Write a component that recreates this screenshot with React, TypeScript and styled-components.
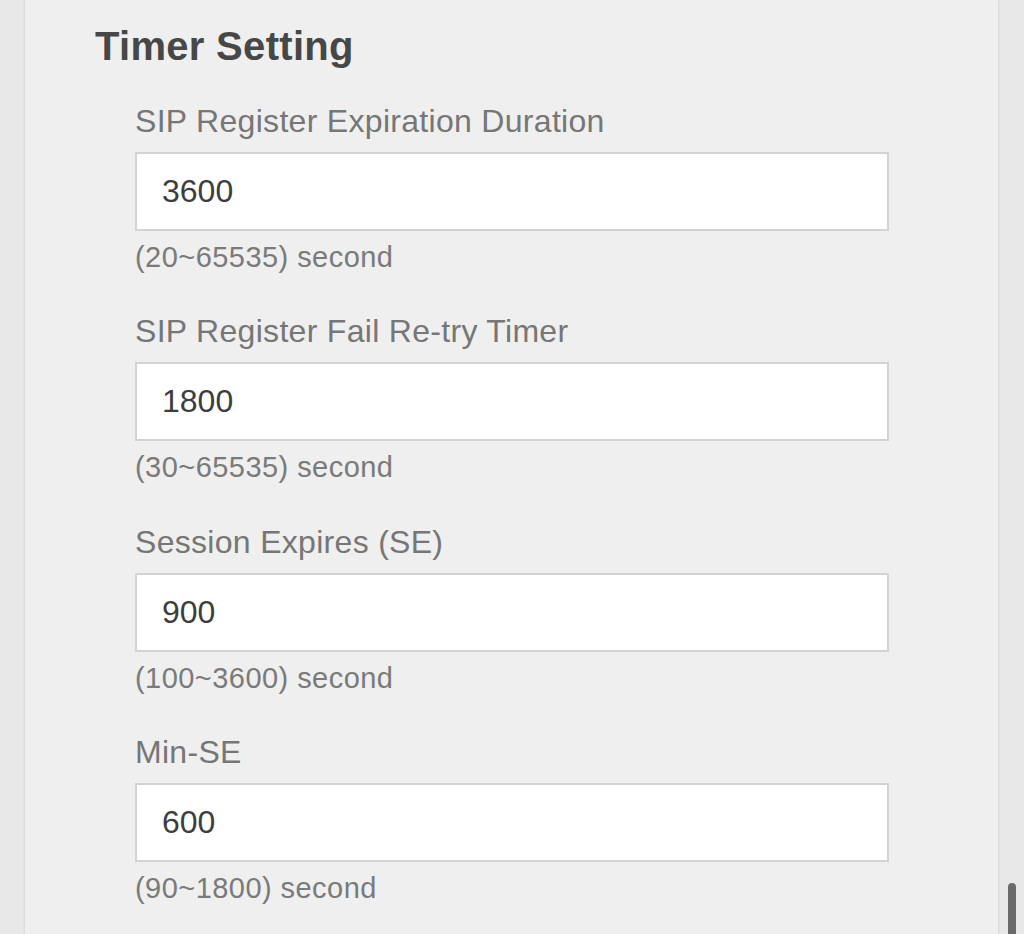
import styled, { createGlobalStyle } from 'styled-components';

const GlobalStyle = createGlobalStyle`
  html, body {
    margin: 0;
    padding: 0;
    height: 100%;
    overflow: hidden;
    background: #e8e8e8;
    font-family: 'Liberation Sans', Arial, Helvetica, sans-serif;
  }
`;

const Page = styled.div`
  display: flex;
  height: 934px;
  padding-left: 25px;
  box-sizing: border-box;
`;

const Panel = styled.section`
  width: 973px;
  height: 100%;
  box-sizing: border-box;
  background: #efefef;
  box-shadow: 0 0 3px rgba(0, 0, 0, 0.14);
  padding: 22px 0 0 70px;
`;

const Heading = styled.h2`
  margin: 0 0 31px;
  font-size: 40px;
  line-height: 48px;
  font-weight: 700;
  letter-spacing: 0.3px;
  color: #474747;
`;

const Fields = styled.div`
  display: flex;
  flex-direction: column;
  gap: 36.3px;
  padding-left: 40px;
`;

const Field = styled.div`
  display: flex;
  flex-direction: column;
`;

const Label = styled.label`
  font-size: 32px;
  line-height: 40px;
  letter-spacing: 0.3px;
  color: #767676;
  margin-bottom: 11px;
`;

const Input = styled.input`
  width: 754px;
  height: 79px;
  box-sizing: border-box;
  border: 2px solid #d3d3d3;
  background: #fff;
  padding: 0 0 0 25px;
  font-family: inherit;
  font-size: 32px;
  color: #3d3d3d;
  outline: none;
`;

const Hint = styled.div`
  margin-top: 8px;
  font-size: 29px;
  line-height: 36px;
  letter-spacing: 0.45px;
  color: #7a7a7a;
`;

const Rail = styled.div`
  flex: 1;
  display: flex;
  flex-direction: column;
  justify-content: flex-end;
  align-items: center;
  padding-left: 2px;
`;

const Thumb = styled.div`
  width: 8px;
  height: 51px;
  border-radius: 4px 4px 0 0;
  background: #6a6a6a;
`;

const fields = [
  { label: 'SIP Register Expiration Duration', value: '3600', hint: '(20~65535) second' },
  { label: 'SIP Register Fail Re-try Timer', value: '1800', hint: '(30~65535) second' },
  { label: 'Session Expires (SE)', value: '900', hint: '(100~3600) second' },
  { label: 'Min-SE', value: '600', hint: '(90~1800) second' },
];

const App = () => (
  <>
    <GlobalStyle />
    <Page>
      <Panel>
        <Heading>Timer Setting</Heading>
        <Fields>
          {fields.map((f) => (
            <Field key={f.label}>
              <Label>{f.label}</Label>
              <Input defaultValue={f.value} />
              <Hint>{f.hint}</Hint>
            </Field>
          ))}
        </Fields>
      </Panel>
      <Rail>
        <Thumb />
      </Rail>
    </Page>
  </>
);

export default App;
